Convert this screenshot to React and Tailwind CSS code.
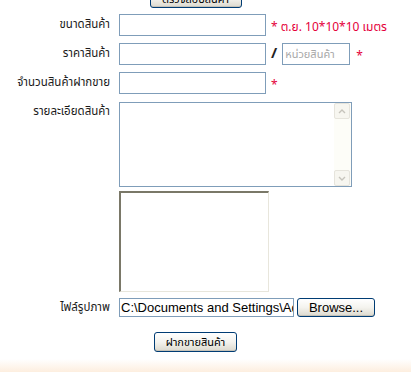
import React from 'react';

const thai = { fontFamily: 'Tahoma, "Noto Sans Thai", Loma, Garuda, "DejaVu Sans", sans-serif' };

const Label = ({ children, top }) => (
  <div
    className={`w-[110px] shrink-0 whitespace-nowrap text-right text-[11.5px] text-[#1a1a1a] ${top ? 'self-start pt-[1px]' : ''}`}
    style={thai}
  >
    {children}
  </div>
);

const Req = ({ children }) => (
  <span className="whitespace-nowrap text-[12px] text-[#e4003a]" style={thai}>
    {children}
  </span>
);

const XpButton = ({ children, className = '' }) => (
  <button
    type="button"
    className={`h-[19px] whitespace-nowrap rounded-[3px] border border-[#003c74] bg-gradient-to-b from-white via-[#f4f3ee] to-[#dcd9ce] leading-none text-black shadow-[inset_0_-1px_0_#c5c2b8] ${className}`}
  >
    {children}
  </button>
);

const Arrow = ({ down }) => (
  <div className="flex h-[16px] w-[16px] items-center justify-center rounded-[2px] border border-[#e6e4dc] bg-[#f7f6f0]">
    <svg width="8" height="5" viewBox="0 0 8 5">
      <path
        d={down ? 'M1 1l3 3 3-3' : 'M1 4l3-3 3 3'}
        fill="none"
        stroke="#c6c4bc"
        strokeWidth="1.4"
      />
    </svg>
  </div>
);

export default function App() {
  return (
    <div className="relative h-[372px] w-[411px] overflow-hidden bg-white">
      {/* ปุ่มด้านบน (ถูกตัด) */}
      <div className="-mt-[11px] flex w-[391px] justify-center">
        <XpButton className="w-[92px] overflow-hidden text-[11px]">
          <span style={thai}>ตรวจสอบสินค้า</span>
        </XpButton>
      </div>

      <div className="mt-[6px] flex flex-col">
        <div className="flex h-[22px] items-center">
          <Label>ขนาดสินค้า</Label>
          <input className="ml-[9px] h-[22px] w-[147px] border border-[#7f9db9] bg-white px-1 outline-none" />
          <span className="ml-[5px]">
            <Req>* ต.ย. 10*10*10 เมตร</Req>
          </span>
        </div>

        <div className="mt-[7px] flex h-[22px] items-center">
          <Label>ราคาสินค้า</Label>
          <input className="ml-[9px] h-[22px] w-[147px] border border-[#7f9db9] bg-white px-1 outline-none" />
          <span className="ml-[5px] text-[15px] font-bold text-[#222]" style={thai}>
            /
          </span>
          <input
            placeholder="หน่วยสินค้า"
            className="ml-[5px] h-[22px] w-[68px] border border-[#7f9db9] bg-white px-[2px] text-[11px] text-[#444] outline-none placeholder:text-[#a8a8a8]"
            style={thai}
          />
          <span className="ml-[6px]">
            <Req>*</Req>
          </span>
        </div>

        <div className="mt-[7px] flex h-[22px] items-center">
          <Label>จำนวนสินค้าฝากขาย</Label>
          <input className="ml-[9px] h-[22px] w-[147px] border border-[#7f9db9] bg-white px-1 outline-none" />
          <span className="ml-[5px]">
            <Req>*</Req>
          </span>
        </div>

        <div className="mt-[8px] flex">
          <Label top>รายละเอียดสินค้า</Label>
          <div className="ml-[9px] flex h-[85px] w-[233px] border border-[#7f9db9] bg-white">
            <textarea className="h-full flex-1 resize-none p-1 outline-none" />
            <div className="flex w-[17px] flex-col justify-between bg-[#fdfdf8]">
              <Arrow />
              <Arrow down />
            </div>
          </div>
        </div>

        <div className="mt-[4px] flex">
          <div className="w-[110px] shrink-0" />
          <div className="ml-[9px] h-[101px] w-[150px] border-l-2 border-t-2 border-r border-b border-l-[#7a7868] border-t-[#7a7868] border-r-[#e8e6dc] border-b-[#e8e6dc] bg-white" />
        </div>

        <div className="mt-[6px] flex h-[19px] items-center">
          <Label>ไฟล์รูปภาพ</Label>
          <div className="ml-[9px] flex items-center">
            <input
              readOnly
              defaultValue="C:\Documents and Settings\Admin\Desktop\pic.jpg"
              className="h-[19px] w-[175px] border border-[#7f9db9] bg-white pl-[1px] text-[13px] text-black outline-none"
              style={{ fontFamily: '"Liberation Sans", Arial, sans-serif' }}
            />
            <XpButton className="ml-[3px] h-[18px] w-[78px] text-[13px]">
              <span style={{ fontFamily: '"Liberation Sans", Arial, sans-serif' }}>Browse...</span>
            </XpButton>
          </div>
        </div>

        <div className="mt-[15px] flex w-[391px] justify-center">
          <XpButton className="h-[20px] w-[83px] text-[11px]">
            <span style={thai}>ฝากขายสินค้า</span>
          </XpButton>
        </div>
      </div>

      <div className="absolute bottom-0 left-0 h-[13px] w-full bg-gradient-to-b from-white to-[#fdeedf]" />
    </div>
  );
}
